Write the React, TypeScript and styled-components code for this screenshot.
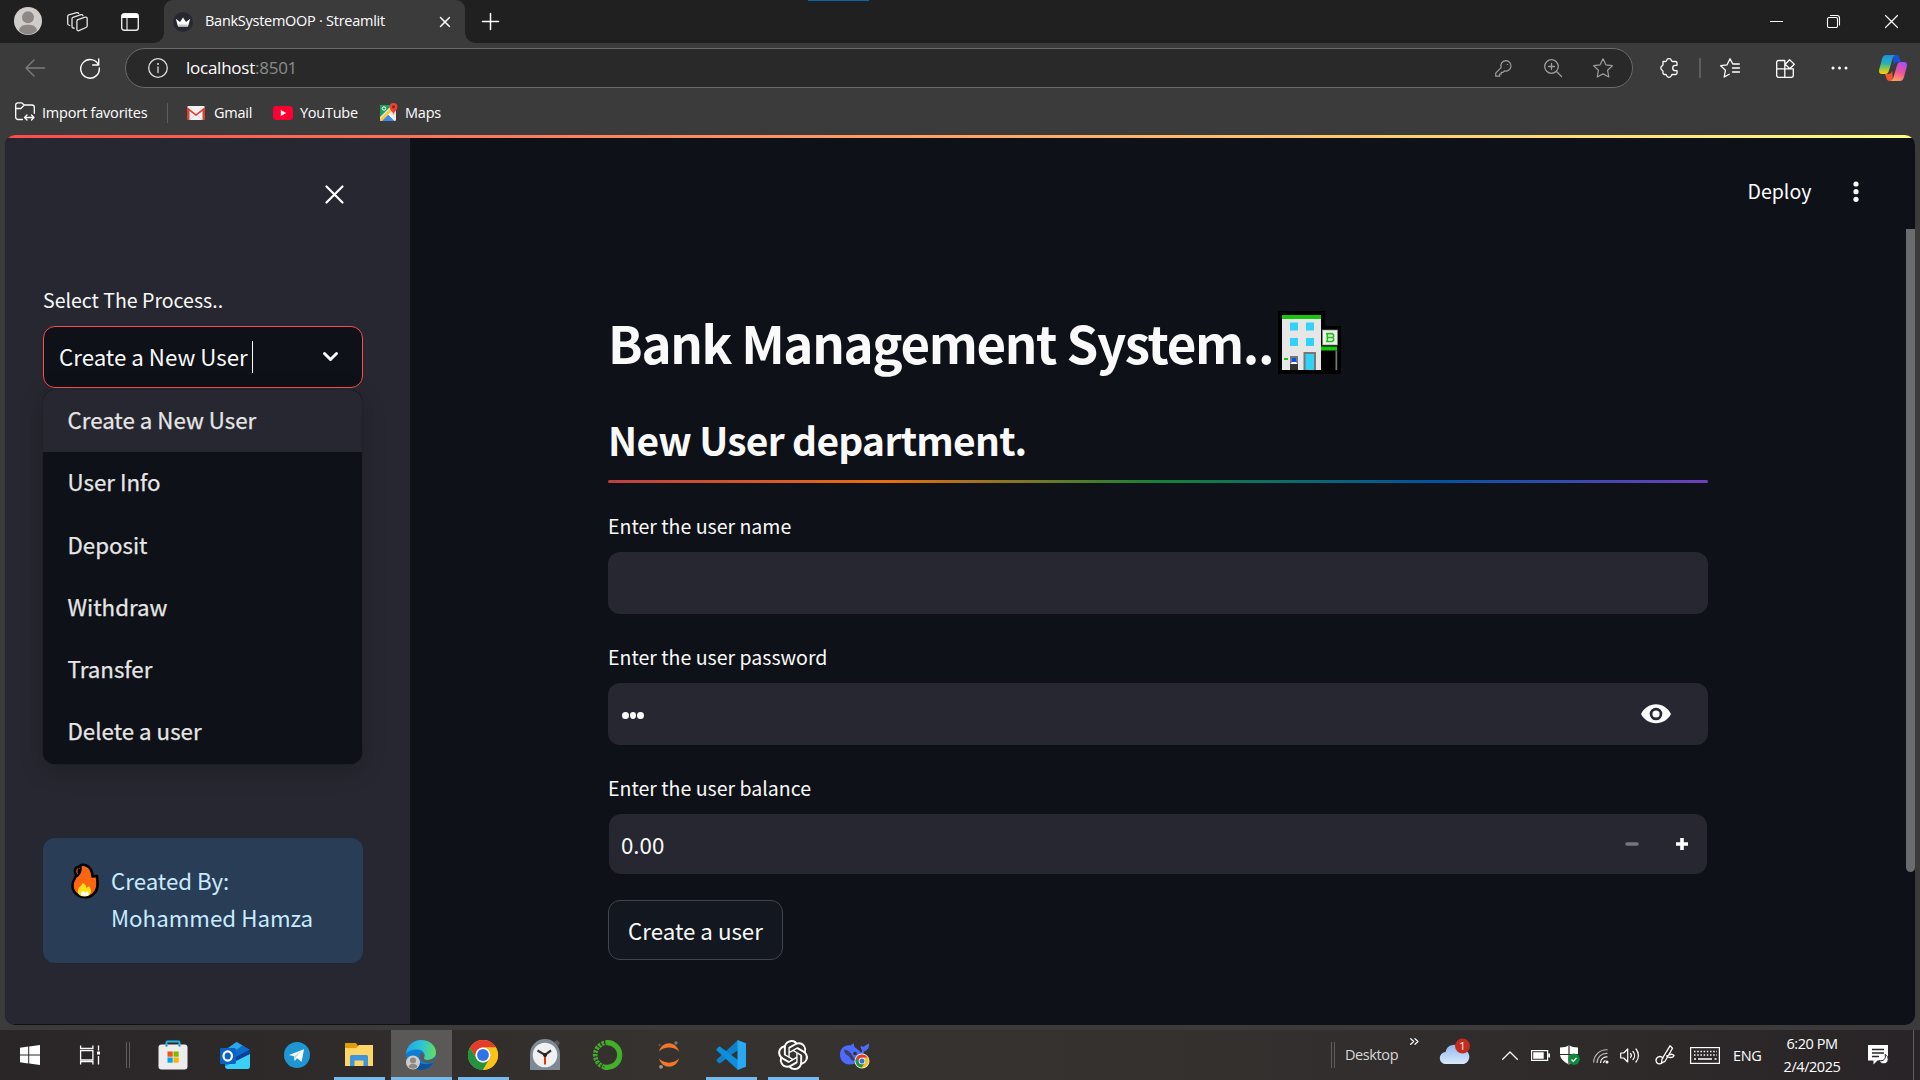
import React from "react";
import styled, { createGlobalStyle, css } from "styled-components";
import { SiOpenai } from "react-icons/si";

const ui = `"Open Sans", "Noto Sans", sans-serif`;
const source = `"Noto Sans CJK SC", "Noto Sans", sans-serif`;

const Global = createGlobalStyle`
  * { box-sizing: border-box; }
  html, body { margin: 0; padding: 0; background: #3b3b3b; overflow: hidden; }
  svg { display: block; flex: none; overflow: visible; }
`;

const Screen = styled.div`
  width: 1920px;
  height: 1080px;
  display: flex;
  flex-direction: column;
  background: #3b3b3b;
  color: #fff;
  font-family: ${ui};
  overflow: hidden;
`;

const Slot = styled.span<{ $ml?: number; $mt?: number }>`
  flex: none;
  display: flex;
  margin-left: ${(p) => p.$ml ?? 0}px;
  margin-top: ${(p) => p.$mt ?? 0}px;
`;

const Label = styled.span<{ $w: number; $size?: number; $ls?: number; $ml?: number; $mt?: number; $color?: string }>`
  flex: none;
  width: ${(p) => p.$w}px;
  margin-left: ${(p) => p.$ml ?? 0}px;
  margin-top: ${(p) => p.$mt ?? 0}px;
  font-size: ${(p) => p.$size ?? 15}px;
  letter-spacing: ${(p) => p.$ls ?? 0}px;
  line-height: 20px;
  white-space: nowrap;
  color: ${(p) => p.$color ?? "#fff"};
`;

/* ---------- browser chrome ---------- */

const TabStrip = styled.header`
  position: relative;
  height: 43px;
  flex: none;
  display: flex;
  align-items: center;
  background: #202020;
`;

const LoadStrip = styled.i`
  position: absolute;
  left: 808px;
  top: 0;
  width: 61px;
  height: 1px;
  background: #0a64ad;
`;

const Tab = styled.div`
  position: relative;
  align-self: stretch;
  width: 301px;
  margin-left: 25px;
  padding-left: 9px;
  display: flex;
  align-items: center;
  background: #3b3b3b;
  border-radius: 9px 9px 0 0;
  &::before,
  &::after {
    content: "";
    position: absolute;
    bottom: 0;
    width: 10px;
    height: 10px;
  }
  &::before {
    left: -10px;
    background: radial-gradient(circle at 0 0, #202020 9.5px, #3b3b3b 10px);
  }
  &::after {
    right: -10px;
    background: radial-gradient(circle at 100% 0, #202020 9.5px, #3b3b3b 10px);
  }
`;

const Toolbar = styled.div`
  height: 45px;
  flex: none;
  padding-top: 5px;
  display: flex;
  align-items: center;
`;

const AddressBar = styled.div`
  width: 1508px;
  height: 40px;
  margin-left: 25px;
  padding-left: 22px;
  display: flex;
  align-items: center;
  border: 1px solid #6a6a6a;
  border-radius: 20px;
  background: #292929;
`;

const Port = styled.span`
  color: #8b8b8b;
`;

const Rule = styled.i<{ $ml: number; $h: number; $w?: number }>`
  flex: none;
  width: ${(p) => p.$w ?? 1}px;
  height: ${(p) => p.$h}px;
  margin-left: ${(p) => p.$ml}px;
  background: #5d5d5d;
`;

const Favorites = styled.nav`
  height: 47px;
  flex: none;
  display: flex;
  align-items: center;
  padding: 2px 0 0 15px;
`;

/* ---------- page ---------- */

const Page = styled.div`
  width: 1910px;
  height: 890px;
  flex: none;
  margin: 0 5px 5px;
  display: flex;
  flex-direction: column;
  border-radius: 10px;
  background: #0e1117;
  overflow: hidden;
  font-family: ${source};
  color: #fafafa;
`;

const Decoration = styled.div`
  height: 3px;
  flex: none;
  background: linear-gradient(90deg, #ff4b4b, #fffd80);
`;

const Columns = styled.div`
  flex: 1;
  display: flex;
`;

const Sidebar = styled.aside`
  width: 405px;
  height: 886px;
  padding: 0 47px 0 38px;
  display: flex;
  flex-direction: column;
  background: #262730;
`;

const CloseRow = styled.div`
  height: 112px;
  padding: 47px 19px 0 0;
  display: flex;
  justify-content: flex-end;
  align-items: flex-start;
`;

const FieldLabel = styled.label<{ $mt?: number }>`
  display: block;
  height: 30px;
  margin-top: ${(p) => p.$mt ?? 0}px;
  font-size: 19.55px;
  line-height: 30px;
  white-space: nowrap;
`;

const SelectWrap = styled.div`
  position: relative;
  width: 320px;
  margin-top: 11px;
`;

const SelectBox = styled.div`
  height: 62px;
  padding: 0 23px 3px 15px;
  display: flex;
  align-items: center;
  border: 1px solid #ff4b4b;
  border-radius: 12px;
  background: #0e1117;
  font-size: 22.3px;
  line-height: 32px;
  white-space: nowrap;
`;

const Caret = styled.i`
  width: 1px;
  height: 32px;
  margin: 3px auto 0 4px;
  background: #fafafa;
`;

const Menu = styled.ul`
  position: absolute;
  left: 0;
  top: 64px;
  width: 319px;
  margin: 0;
  padding: 0;
  list-style: none;
  border-radius: 12px;
  background: #0e1117;
  overflow: hidden;
  box-shadow: 0 6px 24px rgba(0, 0, 0, 0.2), 0 0 1px rgba(0, 0, 0, 0.6);
`;

const MenuItem = styled.li<{ $active?: boolean }>`
  height: 62.3px;
  padding: 13px 0 0 24.5px;
  font-size: 22.3px;
  line-height: 32px;
  color: #e6e6e6;
  -webkit-text-stroke: 0.25px #e6e6e6;
  background: ${(p) => (p.$active ? "#262730" : "transparent")};
`;

const Notice = styled.section`
  width: 320px;
  height: 125px;
  margin-top: 450px;
  padding: 24px 0 0 28px;
  display: flex;
  align-items: flex-start;
  border-radius: 12px;
  background: #2a3d56;
  color: #c7ebff;
  font-size: 22.3px;
  line-height: 37px;
`;

const NoticeText = styled.p`
  margin: 0 0 0 12px;
  width: 215px;
`;

const Main = styled.main`
  flex: 1;
  display: flex;
  flex-direction: column;
`;

const Header = styled.div`
  height: 91px;
  flex: none;
  padding: 36px 56.5px 0 0;
  display: flex;
  justify-content: flex-end;
  font-size: 18.9px;
  line-height: 34px;
`;

const Body = styled.div`
  flex: 1;
  display: flex;
  justify-content: space-between;
`;

const Form = styled.form`
  width: 1100px;
  margin-left: 198px;
`;

const Title = styled.h1`
  height: 64px;
  margin: 81px 0 0;
  display: flex;
  font-size: 51px;
  font-weight: 700;
  line-height: 64px;
  letter-spacing: -1.35px;
  white-space: nowrap;
`;

const TitleText = styled.span`
  flex: none;
  width: 670px;
`;

const Subtitle = styled.h2`
  height: 56px;
  margin: 37px 0 0;
  font-size: 38.9px;
  font-weight: 700;
  line-height: 56px;
  letter-spacing: -0.7px;
`;

const Rainbow = styled.div`
  height: 3px;
  margin-top: 13px;
  border-radius: 3px;
  background: linear-gradient(90deg, #bd4043, #ec6c12 25%, #158237 50%, #0054a3 75%, #6f3fc0);
`;

const Field = styled.div<{ $inset?: boolean }>`
  height: ${(p) => (p.$inset ? 60 : 62)}px;
  margin: 11px ${(p) => (p.$inset ? 1 : 0)}px 0;
  padding-left: ${(p) => (p.$inset ? 12 : 13)}px;
  display: flex;
  align-items: center;
  border-radius: 12px;
  background: #262730;
  font-size: 22.3px;
  line-height: 32px;
`;

const Value = styled.span`
  margin: -1px auto 0 0;
`;

const Dots = styled.span`
  display: flex;
  gap: 1px;
  margin: 2px auto 0 1px;
`;

const Dot = styled.i`
  width: 6.7px;
  height: 7px;
  border-radius: 50%;
  background: #fafafa;
`;

const Submit = styled.button`
  width: 175px;
  height: 60px;
  margin-top: 26px;
  padding: 0 0 1px;
  border: 1px solid #41444c;
  border-radius: 12px;
  background: #13171f;
  color: #fafafa;
  font-family: ${source};
  font-size: 22.3px;
  line-height: 32px;
`;

const ScrollThumb = styled.div`
  width: 9px;
  height: 643px;
  border-radius: 0 0 5px 5px;
  background: #6b6c70;
`;

/* ---------- taskbar ---------- */

const Taskbar = styled.footer`
  height: 50px;
  flex: none;
  display: flex;
  align-items: center;
  background: linear-gradient(90deg, #2a2628, #2e2a2a 15%, #36322f 35%, #35312f 60%, #2e2a2a 85%, #282427);
`;

const underline = css`
  content: "";
  position: absolute;
  bottom: 0;
  height: 3px;
  background: #76b9ed;
`;

const AppButton = styled.div<{ $state?: "open" | "active" }>`
  position: relative;
  align-self: stretch;
  flex: none;
  width: 62px;
  display: flex;
  align-items: center;
  justify-content: center;
  ${(p) => p.$state === "active" && css`background: linear-gradient(90deg, transparent 1px, #5b5958 1px);`}
  ${(p) =>
    p.$state &&
    css`
      &::after {
        ${underline}
        left: ${p.$state === "active" ? 1 : 6}px;
        right: ${p.$state === "active" ? 0 : 5}px;
      }
    `}
`;

const Clock = styled.div`
  flex: none;
  width: 72px;
  margin-left: 8px;
  font-size: 14.5px;
  line-height: 23px;
  letter-spacing: -0.45px;
  text-align: center;
  white-space: nowrap;
`;

const Spacer = styled.i<{ $w: number }>`
  flex: none;
  width: ${(p) => p.$w}px;
`;

/* ---------- drawings ---------- */

type LineProps = { w: number; h: number; d: string; color?: string; sw?: number; fill?: string; children?: React.ReactNode };
const Line = ({ w, h, d, color = "#fff", sw = 1.3, fill = "none", children }: LineProps) => (
  <svg width={w} height={h} viewBox={`0 0 ${w} ${h}`} fill="none">
    <path d={d} stroke={color} strokeWidth={sw} fill={fill} strokeLinecap="round" strokeLinejoin="round" />
    {children}
  </svg>
);

const Avatar = ({ size }: { size: number }) => (
  <svg width={size} height={size} viewBox="0 0 28 28">
    <circle cx="14" cy="14" r="14" fill="#cfccca" />
    <circle cx="14" cy="10.2" r="6" fill="#8d8886" />
    <path d="M5 23.5C6 18.500 10 17.800 14 17.800s8 .7 9 5.700A14 14 0 0 1 14 27.500 14 14 0 0 1 5 23.500z" fill="#8d8886" />
  </svg>
);

const Favicon = () => (
  <svg width="20" height="20" viewBox="0 0 20 20">
    <circle cx="10" cy="10" r="10" fill="#262730" />
    <path d="M2.800 6.800L7 10l3-4.500L13 10l4.200-3.200L15 14.500H5z" fill="#fff" />
    <path d="M5.200 12.500h9.600l-.4 2H5.600z" fill="#c4c4c8" />
  </svg>
);

const Gmail = () => (
  <svg width="18" height="14" viewBox="0 0 18 14">
    <rect width="18" height="14" rx="1.500" fill="#f2f2f2" />
    <path d="M0 14V1l9 7 9-7v13h-2.500V5L9 10 2.500 5v9z" fill="#d93f35" />
    <path d="M3 14l4.500-5M15 14l-4.500-5" stroke="#ccc" strokeWidth=".8" />
  </svg>
);

const YouTube = () => (
  <svg width="20" height="14" viewBox="0 0 20 14">
    <rect width="20" height="14" rx="3.500" fill="#ff0033" />
    <path d="M7.800 4v6l5.400-3z" fill="#fff" />
  </svg>
);

const Maps = () => (
  <svg width="18" height="18" viewBox="0 0 18 18">
    <rect x="0" y="2" width="16" height="16" rx="1.500" fill="#e8e8e8" />
    <path d="M1.500 2H12L0 14V3.500A1.500 1.500 0 0 1 1.500 2z" fill="#1fa05a" />
    <path d="M1.500 18L8 11.500l6.500 6.500z" fill="#4285f4" />
    <path d="M0 16L12 4l2 2L2 18H1.500A1.500 1.500 0 0 1 0 16.500z" fill="#fbc934" />
    <path d="M8.800 10.700l5.700 5.700" stroke="#fff" strokeWidth="1.500" />
    <circle cx="4" cy="5.500" r="1.700" fill="none" stroke="#fff" />
    <path d="M13.500 12c0-3-4-4.500-4-8a4 4 0 0 1 8 0c0 3.500-4 5-4 8z" fill="#ea4335" />
    <circle cx="13.500" cy="4" r="1.400" fill="#8d1f17" />
  </svg>
);

const Copilot = () => (
  <svg width="28" height="26" viewBox="0 0 28 26">
    <defs>
      <linearGradient id="cpA" x1="0" y1="0" x2="0" y2="1">
        <stop offset="0" stopColor="#1b8fe6" />
        <stop offset=".45" stopColor="#2bb2b0" />
        <stop offset=".75" stopColor="#a4c938" />
        <stop offset="1" stopColor="#ffce0a" />
      </linearGradient>
      <linearGradient id="cpB" x1=".6" y1="0" x2=".3" y2="1">
        <stop offset="0" stopColor="#b04df0" />
        <stop offset=".5" stopColor="#f0529b" />
        <stop offset="1" stopColor="#ffa25c" />
      </linearGradient>
    </defs>
    <path d="M14 0h3.500c2 0 2.700 1.200 3.300 3.200L22 7h-3c-2.500 0-3.500 1-4.200 3.500z" fill="#1a4fd6" />
    <path d="M14 26h-3.500c-2 0-2.600-1.200-3.200-3.200L6 19h3c2.500 0 3.500-1 4.200-3.500z" fill="#f0562f" />
    <path d="M7 0h10c-2 0-2.800 1.600-3.400 3.500L10 15.500C9.300 18 8.500 19 6 19H3c-2.600 0-3.400-2-2.800-4.500L3 4C3.800 1.200 5 0 7 0z" fill="url(#cpA)" />
    <path d="M21 26H11c2 0 2.800-1.600 3.400-3.500L18 10.500C18.700 8 19.500 7 22 7h3c2.600 0 3.400 2 2.800 4.500L25 22c-.8 2.800-2 4-4 4z" fill="url(#cpB)" />
  </svg>
);

const Bank = () => (
  <svg width="63" height="63" viewBox="0 0 63 63">
    <path d="M0 0h47v15h16v48H0z" fill="#000" />
    <rect x="4" y="4" width="39" height="55" fill="#e6e6e6" />
    <rect x="4" y="4" width="39" height="4" fill="#17c50e" />
    <g fill="#31d2f7">
      <rect x="12" y="11.500" width="8" height="8" />
      <rect x="28" y="11.500" width="8" height="8" />
      <rect x="12" y="27" width="8" height="8" />
      <rect x="28" y="27" width="8" height="8" />
    </g>
    <rect x="25.500" y="41" width="12.500" height="18" fill="#777" />
    <rect x="27.500" y="43" width="8.500" height="16" fill="#31d2f7" />
    <rect x="6" y="47" width="4" height="2" fill="#17c50e" />
    <rect x="12" y="45" width="8" height="8" fill="#777" />
    <rect x="14" y="47" width="4" height="4" fill="#0050ff" />
    <rect x="12" y="53" width="8" height="6" fill="#333" />
    <path d="M12.500 53l1.500-2h4l1.500 2z" fill="#fff" />
    <rect x="44.500" y="19" width="15" height="15" fill="#eee" stroke="#888" strokeWidth=".7" />
    <path d="M48 22.600h6.300l1.300 1.200v1.700l-1 1 1 1v1.800l-1.300 1.200H48M49.300 22.600v8M49 26.500h5.600" fill="none" stroke="#17c50e" strokeWidth="1.600" />
    <rect x="43" y="35.500" width="16" height="4" fill="#17c50e" />
    <rect x="57.500" y="39.500" width="1.700" height="19.500" fill="#777" />
  </svg>
);

const Fire = () => (
  <svg width="28" height="36" viewBox="0 0 28 36">
    <path
      d="M10 2c5-1 11 2 11.500 11.500L26 13c.3 3 .8 6 .3 11C25.500 30 20 34.300 14 34.300S2 30 1.500 23.500C1 18 4 15.500 5.300 12.500 4 10 3.500 7 5 5c1.500-1.600 3.500-.5 5-3z"
      fill="#fb650f" stroke="#000" strokeWidth="2.600" strokeLinejoin="round"
    />
    <path d="M9.500 3C10.500 8 9 10 6 13.500M8 5.500c-1 2-.5 3.500-.4 5" fill="none" stroke="#000" strokeWidth="2" />
    <path d="M11.500 20c3.500 1.500 3.800 3 4 5l2.500-1.800c2 2.500 3.500 6 0 9-2.600 1.700-6.500 1.600-9 .3C5.500 30 7 26 8.500 24c1.500-1.500 2.700-2.300 3-4z" fill="#ffe01a" />
    <path d="M11 28.500l2.500.3.500 1.500 2-2c1.500 1 2.500 3 1 4.500h-6c-1.500-1-1.500-3 0-4.300z" fill="#fff" />
  </svg>
);

const Eye = () => (
  <svg width="30" height="20" viewBox="0 0 30 20">
    <path
      fillRule="evenodd" fill="#fafafa"
      d="M15 .2c6.500 0 12.300 4 15 9.800-2.700 5.500-8.500 9.300-15 9.300S2.700 15.500 0 10C2.700 4.200 8.500.2 15 .2zM15 3.700a6.300 6.300 0 1 0 0 12.600 6.300 6.300 0 0 0 0-12.600z"
    />
    <circle cx="15" cy="10" r="3.600" fill="#fafafa" />
  </svg>
);

const Chrome = ({ size }: { size: number }) => (
  <svg width={size} height={size} viewBox="0 0 30 30">
    <circle cx="15" cy="15" r="15" fill="#fbc116" />
    <path d="M2 7.500A15 15 0 0 1 28 7.500H15a7.500 7.500 0 0 0-6.500 11.250z" fill="#e33b2e" />
    <path d="M2 7.500A15 15 0 0 0 15 30l6.500-11.250a7.500 7.500 0 0 1-13 0z" fill="#229342" />
    <path d="M15 30A15 15 0 0 0 28 7.500H15a7.500 7.500 0 0 1 6.500 11.250z" fill="#fbc116" />
    <circle cx="15" cy="15" r="7.500" fill="#fff" />
    <circle cx="15" cy="15" r="5.900" fill="#2f73e8" />
  </svg>
);

const WindowsLogo = () => (
  <svg width="20" height="20" viewBox="0 0 20 20" fill="#fff">
    <path d="M0 2.800L8.200 1.600v7.900H0zM9.200 1.500L20 0v9.500H9.200zM0 10.500h8.200v7.900L0 17.200zM9.200 10.500H20V20L9.200 18.500z" />
  </svg>
);

const TaskView = () => (
  <svg width="20" height="20" viewBox="0 0 20 20" fill="none" stroke="#fff" strokeWidth="1.300">
    <path d="M.6.500v3h12.300v-3M.6 5.600h12.300v9.200H.6zM.6 19.500v-3h12.300v3M18.500.500v5M18.500 11v8.500" />
    <rect x="17" y="6.500" width="3" height="3" fill="#fff" stroke="none" />
  </svg>
);

const Store = () => (
  <svg width="30" height="30" viewBox="0 0 30 30">
    <path d="M8.500 7V2.500a1 1 0 0 1 1-1h11a1 1 0 0 1 1 1V7" fill="none" stroke="#1cb8ee" strokeWidth="2" />
    <rect x=".5" y="4.500" width="29" height="25" rx="3" fill="#ededed" />
    <path d="M8.500 4.500v2M21.500 4.500v2" stroke="#1583c5" strokeWidth="2" />
    <path d="M9.500 11.500h5.200v5.200H9.500z" fill="#f1511b" />
    <path d="M15.500 11.500h5.200v5.200h-5.200z" fill="#80b900" />
    <path d="M9.500 17.500h5.200v5.200H9.500z" fill="#00a3ee" />
    <path d="M15.500 17.500h5.200v5.200h-5.200z" fill="#fbb300" />
  </svg>
);

const Outlook = () => (
  <svg width="30" height="27" viewBox="0 0 30 27">
    <path d="M4 9L16.500 0 30 8v16a3 3 0 0 1-3 3H8a3 3 0 0 1-3-3z" fill="#1b87dd" />
    <path d="M8 6l8.500-6 6 3.500L10 13z" fill="#2ba6e8" />
    <path d="M22.500 3.500L30 8l-14 9-6-4z" fill="#0a6ccb" />
    <path d="M14 16L30 7.500v5L16 20z" fill="#0b3f93" />
    <path d="M30 12v12a3 3 0 0 1-3 3H8c-1.500 0-3-1.500-3-2.500z" fill="#3bd0f7" />
    <rect x="0" y="6" width="16" height="16" rx="1.500" fill="#0a63c4" />
    <ellipse cx="7.700" cy="14" rx="4.200" ry="4.700" fill="none" stroke="#fff" strokeWidth="2.200" />
  </svg>
);

const Telegram = () => (
  <svg width="26" height="26" viewBox="0 0 26 26">
    <circle cx="13" cy="13" r="13" fill="#1f96d4" />
    <path d="M5 13L20 7.300l-2.400 12.500-4.600-3.500-2.300 2.600-.8-4.700z" fill="#fff" />
    <path d="M9.900 14.200l7.300-5-5.500 6.300-1 3.400z" fill="#b9dcf0" />
  </svg>
);

const Explorer = () => (
  <svg width="28" height="24" viewBox="0 0 28 24">
    <path d="M0 0h11l2 3v4H0z" fill="#e29d04" />
    <path d="M0 5h11l3-3h14v21H0z" fill="#ffd568" />
    <path d="M5 23v-9.500A1.500 1.500 0 0 1 6.500 12h15a1.500 1.500 0 0 1 1.500 1.500V23h-4.500v-5.500h-9V23z" fill="#3c95dd" />
  </svg>
);

const Edge = () => (
  <svg width="30" height="30" viewBox="0 0 30 30">
    <defs>
      <linearGradient id="edA" x1="0" y1=".4" x2="1" y2=".5">
        <stop offset="0" stopColor="#1fa6e6" />
        <stop offset=".5" stopColor="#2ec4d4" />
        <stop offset="1" stopColor="#63dd62" />
      </linearGradient>
    </defs>
    <circle cx="15" cy="15" r="15" fill="#0f7bd3" />
    <path d="M11 17c0 7 7 9 17 5.500C25 27 20 30 15 30 9 30 6 24 7.500 18z" fill="#10519c" />
    <path d="M0 14C.5 5 8 0 15 0c9 0 15 6 15 12.500 0 5-4.500 7.500-8.500 7.500-3 0-4.500-1-3.500-2.500 2-3-.5-8-7-8S1 12 0 14z" fill="url(#edA)" />
    <path d="M18.300 17c-1 2-.2 3 3 3 3 0 5.500-.8 7.500-3.500v5c-4 2-10 1.500-13-.5-3-2-3-6-.5-8 2 0 3.500 2 3 4z" fill="#5b5958" />
    <circle cx="7" cy="22.500" r="7" fill="#cfccca" />
    <circle cx="7" cy="20.500" r="3" fill="#8d8886" />
    <path d="M2.500 27c.5-2.500 2.500-3 4.500-3s4 .5 4.500 3a7 7 0 0 1-9 0z" fill="#8d8886" />
  </svg>
);

const ClockApp = () => (
  <svg width="30" height="30" viewBox="0 0 30 30">
    <path d="M24 2l3-2 3 3-2 3z" fill="#555" />
    <path d="M0 30V14a15 15 0 0 1 30 0v16z" fill="#7d8995" />
    <circle cx="15" cy="15" r="12.300" fill="#f0f0f2" />
    <path d="M15 15v9.500" stroke="#d83b01" strokeWidth="2" />
    <path d="M7.500 10.500L15 15l6-4.500" stroke="#333" strokeWidth="2.200" fill="none" />
    <circle cx="15" cy="15" r="2" fill="#222" />
  </svg>
);

const Anaconda = () => (
  <svg width="30" height="30" viewBox="0 0 30 30" fill="none">
    <path d="M14 2.700A12.400 12.400 0 1 1 12 27" stroke="#43b02a" strokeWidth="5.200" />
    <path d="M12.500 27A12.400 12.400 0 0 1 14 2.700" stroke="#43b02a" strokeWidth="4.600" strokeDasharray="2.600 1.100" />
    <path d="M12.500 27A12.400 12.400 0 0 1 14 2.700" stroke="#35312f" strokeWidth="1" strokeDasharray="1.500 2" />
  </svg>
);

const Jupyter = () => (
  <svg width="22" height="28" viewBox="0 0 22 28">
    <path d="M1 10.500C4-.5 18-.5 21 10.500 16 5 6 5 1 10.500zM1 17.500c3 11 17 11 20 0-5 5.500-15 5.500-20 0z" fill="#f37726" />
    <circle cx="18" cy="2" r="1.700" fill="#777" />
    <circle cx="1.500" cy="4" r="1" fill="#666" />
    <circle cx="3" cy="25.800" r="1.900" fill="#999" />
  </svg>
);

const VsCode = () => (
  <svg width="30" height="30" viewBox="0 0 30 30">
    <path d="M22 0L1 19.200c-.8.700-.8 1.700 0 2.400l1.600 1.400c.6.500 1.300.5 1.900.1L22 10z" fill="#0e80c8" />
    <path d="M22 30L1 10.800c-.8-.7-.8-1.700 0-2.400L2.600 7c.6-.5 1.300-.5 1.900-.1L22 20z" fill="#0d8fdc" />
    <path d="M21.500 0L30 3.300v23.400L21.500 30z" fill="#29a9f2" />
  </svg>
);

const DeepSeek = () => (
  <svg width="30" height="26" viewBox="0 0 30 26">
    <path
      d="M0 13C0 6 5 2.500 10.500 3.500c1-.8 2-2 3.500-2-.5 2.500.5 4 3 5.500 1.500 1 3 1.800 3.800 3.500 2-.7 1.200-2.500 0-4.500-.7-1.500.5-2.500 1.500-1.500 2 1.500 3.700-2.500 6.700-3 .5 4-1.500 7-5 8-.5 5-3 8-6 10C14 23 6 24 2 19c-1.400-1.800-2-4-2-6z"
      fill="#4d6bfe"
    />
    <path d="M4 7.500c6 .5 9 6.500 11.500 11.500-4 .5-5-3-7-5-1.500-1.500-4-1-4.500-6.500z" fill="#35312f" opacity=".75" />
    <circle cx="15" cy="11.500" r="1.800" fill="#35312f" />
    <g transform="translate(14.500 11.500)">
      <circle cx="7.500" cy="7.500" r="7.500" fill="#eee" />
      <g transform="translate(1 1)">
        <Chrome size={13} />
      </g>
    </g>
  </svg>
);

const Weather = () => (
  <svg width="30" height="28" viewBox="0 0 30 28">
    <defs>
      <linearGradient id="cl" x1="0" y1="0" x2="0" y2="1">
        <stop offset="0" stopColor="#8fb8ee" />
        <stop offset="1" stopColor="#dbe9fb" />
      </linearGradient>
    </defs>
    <path d="M6 26a6 6 0 0 1-.5-12A8.500 8.500 0 0 1 21.500 11.500 7.400 7.400 0 0 1 24 26z" fill="url(#cl)" />
    <circle cx="22.500" cy="8" r="7.500" fill="#c42b1c" />
    <text x="22.500" y="12" fontSize="11" fill="#fff" textAnchor="middle" fontFamily="Open Sans">1</text>
  </svg>
);

const Shield = () => (
  <svg width="20" height="20" viewBox="0 0 20 20">
    <path d="M9 0c2.500 1.800 5 2.500 9 2.500V9c0 4.500-4 8-9 10.500C4 17 0 13.500 0 9V2.500C4 2.500 6.500 1.800 9 0z" fill="#fff" />
    <path d="M9 0v19M0 9.500h18" stroke="#2e2a2a" strokeWidth="1.200" />
    <circle cx="14" cy="14.300" r="5.700" fill="#10893e" />
    <path d="M11.500 14.500l1.800 1.800 3.200-3.500" stroke="#fff" strokeWidth="1.200" fill="none" />
  </svg>
);

const Keyboard = () => (
  <svg width="30" height="17" viewBox="0 0 30 17" fill="none" stroke="#fff">
    <rect x=".6" y=".6" width="28.800" height="15.800" strokeWidth="1.200" />
    <path d="M4 4.500h23M4 8h23" strokeWidth="1.500" strokeDasharray="1.500 1.700" />
    <path d="M4 12h2M8 12h14M24.500 12h2" strokeWidth="1.300" />
  </svg>
);

const Notifications = () => (
  <svg width="20" height="20" viewBox="0 0 20 20">
    <path d="M0 0h20v15.500H9.500L5.500 19.500V15.500H0z" fill="#fff" />
    <path d="M4 4.500h12M4 8h12M4 11.500h7" stroke="#2a2628" strokeWidth="1.300" />
    <path d="M17 9.500c1.500 4-1.500 7-6 6.300 1.500 4 8.500 4.500 9.200-1 .2-2.500-1.200-4.500-3.200-5.300z" fill="#fff" stroke="#2a2628" strokeWidth="1" />
  </svg>
);

const STAR = "M10 .8l2.900 6 6.400.9-4.700 4.600 1.200 6.700L10 15.900 4.200 19l1.200-6.700L.7 7.700l6.400-.9z";

const processes = ["Create a New User", "User Info", "Deposit", "Withdraw", "Transfer", "Delete a user"];

const apps: { icon: React.ReactNode; state?: "open" | "active" }[] = [
  { icon: <Store /> },
  { icon: <Outlook /> },
  { icon: <Telegram /> },
  { icon: <Explorer />, state: "open" },
  { icon: <Edge />, state: "active" },
  { icon: <Chrome size={30} />, state: "open" },
  { icon: <ClockApp /> },
  { icon: <Anaconda /> },
  { icon: <Jupyter /> },
  { icon: <VsCode />, state: "open" },
  { icon: <SiOpenai size={30} color="#fff" />, state: "open" },
  { icon: <DeepSeek /> },
];

const BrowserChrome = () => (
  <>
    <TabStrip>
      <LoadStrip />
      <Slot $ml={14} $mt={-1}><Avatar size={28} /></Slot>
      <Slot $ml={25}>
        <svg width="21" height="20" viewBox="0 0 21 20" fill="none" stroke="#e4e4e4" strokeWidth="1.300" strokeLinejoin="round" strokeLinecap="round">
          <path d="M10.200 7.800l8-2.600a1.500 1.500 0 0 1 2 1.400v7.200a1.800 1.800 0 0 1-1.300 1.700l-7 3.200a1.500 1.500 0 0 1-2-1.400V9.200c0-.7.4-1.200.9-1.400z" />
          <path d="M7.200 16.200l-1-.2a1.500 1.500 0 0 1-1.200-1.500V6.800c0-.7.400-1.300 1-1.500l8-2.600c.8-.2 1.600.1 2 1" />
          <path d="M2.700 13.300l-1-.3A1.500 1.500 0 0 1 .7 11.500V4.400c0-.7.400-1.300 1-1.500L9.800.700c.8-.2 1.500.1 1.900.7" />
        </svg>
      </Slot>
      <Slot $ml={33}>
        <svg width="18" height="18" viewBox="0 0 18 18">
          <rect x=".7" y=".7" width="16.600" height="16.600" rx="2.500" fill="none" stroke="#e8e8e8" strokeWidth="1.400" />
          <path d="M.7 5V3A2.300 2.300 0 0 1 3 .7h12A2.300 2.300 0 0 1 17.300 3v2z" fill="#fff" />
          <path d="M6 5v12" stroke="#e8e8e8" strokeWidth="1.200" />
        </svg>
      </Slot>
      <Tab>
        <Slot><Favicon /></Slot>
        <Label $ml={12} $w={235} $size={14.500} $ls={-0.27} $mt={-1}>BankSystemOOP · Streamlit</Label>
        <Line w={10} h={10} d="M.5.5l9 9M9.500.5l-9 9" sw={1.500} />
      </Tab>
      <Slot $ml={17} $mt={-1}><Line w={17} h={17} d="M8.500 .5v16M.5 8.500h16" sw={1.500} /></Slot>
      <Slot $ml={1271}><Line w={13} h={13} d="M.5 6.500h12" sw={1.100} /></Slot>
      <Slot $ml={44}>
        <Line w={13} h={13} sw={1.100} d="M2 2.500h7a1.500 1.500 0 0 1 1.500 1.500v7a1.500 1.500 0 0 1-1.500 1.500H2A1.500 1.500 0 0 1 .5 11V4A1.500 1.500 0 0 1 2 2.500zM3.500 .5h6.500a2.500 2.500 0 0 1 2.500 2.500v7" />
      </Slot>
      <Slot $ml={45}><Line w={13} h={13} d="M.5.5l12 12M12.500.5l-12 12" sw={1.200} /></Slot>
    </TabStrip>

    <Toolbar>
      <Slot $ml={25} $mt={-1}><Line w={20} h={18} d="M9 1L1 9l8 8M1 9h18.500" color="#7d7d7d" sw={1.300} /></Slot>
      <Slot $ml={35}><Line w={20} h={20} d="M18.500 7A9.300 9.300 0 1 0 19.300 10M18.700 1v6h-6" sw={1.400} /></Slot>
      <AddressBar>
        <Line w={20} h={20} sw={1.300} d="M10 .7a9.300 9.300 0 1 0 0 18.600A9.300 9.300 0 0 0 10 .7zM10 9v5.500" color="#dedede">
          <circle cx="10" cy="6" r="1" fill="#dedede" />
        </Line>
        <Label $ml={18} $w={1309} $size={17} $ls={-0.25} $mt={-1}>localhost<Port>:8501</Port></Label>
        <Line w={17} h={17} color="#9d9d9d" sw={1.200} d="M11 .7a5.200 5.200 0 1 1-1.600 10.200L8 12.300H6.300V14H4.600v2.200H.7v-3l5.400-5.600A5.200 5.200 0 0 1 11 .7zM12.300 4.500h.3" />
        <Slot $ml={32}><Line w={18} h={18} color="#9d9d9d" sw={1.300} d="M7.500.7a6.800 6.800 0 1 0 0 13.600 6.800 6.800 0 0 0 0-13.600zM12.500 12.500l5 5M7.500 4.500v6M4.500 7.500h6" /></Slot>
        <Slot $ml={31}><Line w={20} h={20} color="#9d9d9d" sw={1.200} d={STAR} /></Slot>
      </AddressBar>
      <Slot $ml={27}>
        <Line w={19} h={20} sw={1.300} d="M3 3.500h2.300A1.200 1.200 0 0 0 6.500 2.600a2.600 2.600 0 0 1 5 0 1.200 1.200 0 0 0 1.200.9h2.800a1.500 1.500 0 0 1 1.500 1.500v2.300h-1.600a2.700 2.700 0 0 0 0 5.400H17v2.300a1.500 1.500 0 0 1-1.500 1.500h-2.800a1.200 1.200 0 0 0-1.200.9 2.600 2.600 0 0 1-5 0 1.200 1.200 0 0 0-1.200-.9H4.500A1.500 1.500 0 0 1 3 15v-1.500a1.200 1.200 0 0 0-.6-1 2.700 2.700 0 0 1 0-4.900 1.200 1.200 0 0 0 .6-1z" />
      </Slot>
      <Rule $ml={20} $h={20} $w={2} />
      <Slot $ml={19}>
        <svg width="20" height="20" viewBox="0 0 20 20" fill="none" stroke="#fff" strokeWidth="1.300" strokeLinecap="round" strokeLinejoin="round">
          <path d="M19.300 6H12.800L10 .8 7.100 6.800.7 7.700l4.700 4.600L4.200 19l5-2.700M12.500 10h7M12.500 14h7" />
        </svg>
      </Slot>
      <Slot $ml={36}>
        <Line w={19} h={19} sw={1.300} d="M2.500 1.500h6.300v16.800H2.500A1.800 1.800 0 0 1 .7 16.500V3.300A1.800 1.800 0 0 1 2.500 1.500zM.7 9.800h16.600v6.700a1.800 1.800 0 0 1-1.800 1.800H8.800M13.600 .8L18.300 5.300 13.800 9.800 9.200 5.300z" />
      </Slot>
      <Slot $ml={36}>
        <svg width="17" height="4" viewBox="0 0 17 4" fill="#fff">
          <circle cx="2" cy="2" r="1.500" /><circle cx="8.500" cy="2" r="1.500" /><circle cx="15" cy="2" r="1.500" />
        </svg>
      </Slot>
      <Slot $ml={31}><Copilot /></Slot>
    </Toolbar>

    <Favorites>
      <Slot $mt={-2}>
        <Line w={20} h={19} sw={1.300} d="M7.500 17.500H3A2.300 2.300 0 0 1 .7 15.200V3A2.300 2.300 0 0 1 3 .8h3.700L9.200 3H17a2.300 2.300 0 0 1 2.300 2.300v6M.9 6.500h5L9.200 3M9.500 15.500h9.500M12 13l-2.500 2.500L12 18M16.500 13l2.500 2.500L16.500 18" />
      </Slot>
      <Label $ml={7} $w={125} $size={14.500} $ls={-0.2}>Import favorites</Label>
      <Rule $ml={0} $h={20} />
      <Slot $ml={19}><Gmail /></Slot>
      <Label $ml={9} $w={59} $size={14.500} $ls={-0.25}>Gmail</Label>
      <YouTube />
      <Label $ml={7} $w={80} $size={14.500} $ls={-0.25}>YouTube</Label>
      <Slot $mt={-1}><Maps /></Slot>
      <Label $ml={7} $w={60} $size={14.500} $ls={-0.2}>Maps</Label>
    </Favorites>
  </>
);

export default function App() {
  return (
    <Screen>
      <Global />
      <BrowserChrome />
      <Page>
        <Decoration />
        <Columns>
          <Sidebar>
            <CloseRow><Line w={19} h={19} d="M1.500 1.500l16 16M17.500 1.500l-16 16" sw={2.200} /></CloseRow>
            <FieldLabel $mt={35}>Select The Process..</FieldLabel>
            <SelectWrap>
              <SelectBox>
                {processes[0]}
                <Caret />
                <Slot $mt={1}><Line w={17} h={11} d="M2.500 2.500l6 6 6-6" sw={3} color="#fafafa" /></Slot>
              </SelectBox>
              <Menu>
                {processes.map((p, i) => (
                  <MenuItem key={p} $active={i === 0}>{p}</MenuItem>
                ))}
              </Menu>
            </SelectWrap>
            <Notice>
              <Slot $mt={1}><Fire /></Slot>
              <NoticeText>Created By: Mohammed Hamza</NoticeText>
            </Notice>
          </Sidebar>
          <Main>
            <Header>
              <Label as="span" $w={105} $size={19.550} $mt={7}>Deploy</Label>
              <Slot $mt={7}>
                <svg width="6" height="22" viewBox="0 0 6 22" fill="#fafafa">
                  <circle cx="3" cy="3" r="2.600" /><circle cx="3" cy="10.700" r="2.600" /><circle cx="3" cy="18.300" r="2.600" />
                </svg>
              </Slot>
            </Header>
            <Body>
              <Form>
                <Title><TitleText>Bank Management System..</TitleText><Slot $mt={1}><Bank /></Slot></Title>
                <Subtitle>New User department.</Subtitle>
                <Rainbow />
                <FieldLabel $mt={28}>Enter the user name</FieldLabel>
                <Field />
                <FieldLabel $mt={28}>Enter the user password</FieldLabel>
                <Field>
                  <Dots><Dot /><Dot /><Dot /></Dots>
                  <Eye />
                  <Spacer $w={37} />
                </Field>
                <FieldLabel $mt={28}>Enter the user balance</FieldLabel>
                <Field $inset>
                  <Value>0.00</Value>
                  <Line w={12} h={12} d="M1 6h10" sw={3.500} color="#757685" />
                  <Spacer $w={38} />
                  <svg width="12" height="12" viewBox="0 0 12 12" fill="#fff"><path d="M4.200 0h3.600v4.200H12v3.600H7.800V12H4.200V7.800H0V4.200h4.200z" /></svg>
                  <Spacer $w={19} />
                </Field>
                <Submit type="button">Create a user</Submit>
              </Form>
              <ScrollThumb />
            </Body>
          </Main>
        </Columns>
      </Page>

      <Taskbar>
        <Slot $ml={20}><WindowsLogo /></Slot>
        <Slot $ml={40}><TaskView /></Slot>
        <Rule $ml={26} $h={26} />
        <Rule $ml={2} $h={26} />
        <Spacer $w={12} />
        {apps.map((a, i) => (
          <AppButton key={i} $state={a.state}>{a.icon}</AppButton>
        ))}
        <Rule $ml={445} $h={26} />
        <Rule $ml={2} $h={26} />
        <Label $ml={10} $w={65} $size={14.500} $ls={-0.4} $mt={-1} $color="#d8d8d8">Desktop</Label>
        <Slot $mt={-27}><Line w={9} h={7} d="M.7.7l3 2.800-3 2.800M5 .7l3 2.800-3 2.800" sw={1.200} /></Slot>
        <Slot $ml={21} $mt={-6}><Weather /></Slot>
        <Slot $ml={32}><Line w={16} h={9} d="M.7 8.300L8 1l7.300 7.300" /></Slot>
        <Slot $ml={13} $mt={1}>
          <svg width="19" height="11" viewBox="0 0 19 11"><path d="M.6.600h16v9.800H.6z" fill="none" stroke="#fff" strokeWidth="1.200" /><path d="M2.200 2.200h10.500v6.600H2.200zM17.200 3.500H19v4h-1.800z" fill="#fff" /></svg>
        </Slot>
        <Slot $ml={10}><Shield /></Slot>
        <Slot $ml={13} $mt={2}>
          <svg width="16" height="15" viewBox="0 0 16 15" fill="none" strokeWidth="1.200">
            <path d="M.7 13.500A12.800 12.800 0 0 1 14.500.8M4 14A9.500 9.500 0 0 1 14.500 4.400" stroke="#bbb" />
            <path d="M7.500 14A6 6 0 0 1 14.500 8M10.500 14a3 3 0 0 1 2-2.500" stroke="#fff" />
            <circle cx="14" cy="13" r="1.500" fill="#fff" />
          </svg>
        </Slot>
        <Slot $ml={11}><Line w={20} h={15} sw={1.200} d="M.7 5h3l4-4v13l-4-4h-3zM10.500 5.500a3 3 0 0 1 0 4M13 3.500a6 6 0 0 1 0 8M16 1a10 10 0 0 1 0 13" /></Slot>
        <Slot $ml={15}><Line w={20} h={20} sw={1.300} d="M15 .8l2.500 2.500-7.500 13L6.500 18l.5-4zM8 13c-3-3-7-1-7 2.500 0 3 3.500 4.500 6 2.500M11.500 11c2.500-1.500 6-2.500 7.500-.5-.5 2-3.500 2.500-6 1.500" /></Slot>
        <Slot $ml={15} $mt={1}><Keyboard /></Slot>
        <Label $ml={13} $w={35} $size={14.500} $ls={-0.3} $mt={2}>ENG</Label>
        <Clock>6:20 PM<br />2/4/2025</Clock>
        <Slot $ml={20}><Notifications /></Slot>
        <Rule $ml={25} $h={50} />
      </Taskbar>
    </Screen>
  );
}
